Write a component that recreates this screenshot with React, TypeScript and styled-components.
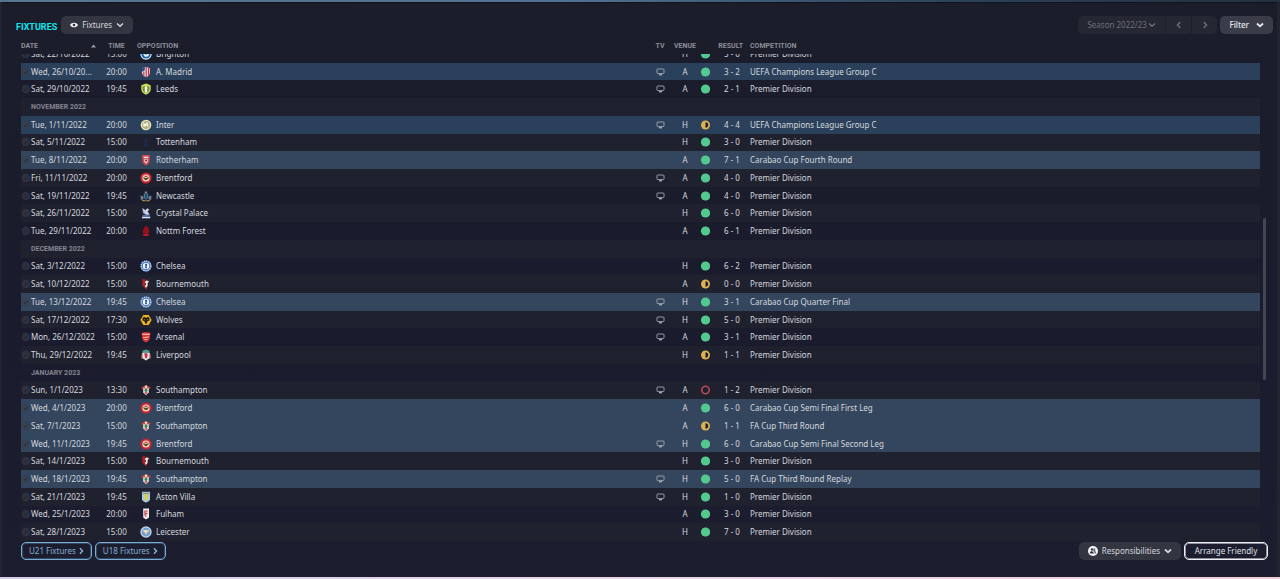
import React from 'react';
import styled, { createGlobalStyle, css } from 'styled-components';

const GlobalStyle = createGlobalStyle`
  *, *::before, *::after { box-sizing: border-box; }
  body {
    margin: 0;
    background: #1a1c2b;
    color: #d5d8df;
    font-family: 'Noto Sans', sans-serif;
    font-size: 8px;
    line-height: 12px;
  }
  button, select { font: inherit; color: inherit; margin: 0; cursor: pointer; }
`;

/* ---------- page frame ---------- */

const Page = styled.div`
  display: flex;
  flex-direction: column;
  min-height: 100vh;
  background: #22242f;
`;

const TopEdge = styled.div`
  height: 2px;
  background: linear-gradient(90deg, #587690 0%, #4f7190 45%, #2c4258 75%, #24303f 100%);
`;

const BottomEdge = styled.div`
  height: 2px;
  background: linear-gradient(90deg, #d3cde6 0%, #e6d3e6 45%, #f3cbd6 100%);
`;

const Panel = styled.main`
  flex: 1;
  display: flex;
  flex-direction: column;
  margin: 0 3px 0 2px;
  padding-top: 13px;
  background: linear-gradient(180deg, #1b1d2b, #1a1c2d 50%, #1c1d2e);
  border-top: 1px solid #10121d;
`;

const TitleBar = styled.header`
  display: flex;
  align-items: center;
  height: 18px;
  padding: 0 4px 0 14px;
`;

const Title = styled.h1`
  margin: 4px 4px 0 0;
  font-family: Roboto, sans-serif;
  font-size: 9px;
  line-height: 12px;
  font-weight: 700;
  color: #0fe6ee;
`;

const Spacer = styled.div`
  flex: 1;
`;

/* ---------- controls ---------- */

const MenuButton = styled.button<{ $strong?: boolean }>`
  display: flex;
  align-items: center;
  justify-content: center;
  height: 18px;
  padding: 0 9px;
  border: 0;
  border-radius: 5px;
  background: ${(p) => (p.$strong ? '#3a3d49' : '#333541')};
  font-weight: ${(p) => (p.$strong ? 500 : 400)};
  color: ${(p) => (p.$strong ? '#e9ebef' : '#d5d8df')};
`;

const ButtonLabel = styled.span`
  margin: 0 4px;
`;

const FilterLabel = styled.span`
  margin-right: 7px;
`;

const SeasonGroup = styled.div`
  display: flex;
  height: 18px;
  margin-right: 3px;
  border-radius: 5px;
  background: #252732;
  color: #6d707b;
`;

const SeasonField = styled.label`
  display: flex;
  align-items: center;
  width: 87px;
  padding-left: 9px;
`;

const SeasonSelect = styled.select`
  appearance: none;
  width: 61px;
  height: 18px;
  padding: 0;
  border: 0;
  background: transparent;
`;

const StepButton = styled.button`
  display: flex;
  align-items: center;
  justify-content: center;
  width: 26px;
  padding: 0;
  border: 0;
  border-left: 1px solid #1d1f2c;
  background: transparent;
`;

const OutlineButton = styled.button<{ $tone: 'blue' | 'white' }>`
  display: flex;
  align-items: center;
  justify-content: center;
  gap: 3px;
  height: 18px;
  padding: 0 7px;
  border: 1px solid;
  border-radius: 5px;
  background: transparent;
  ${(p) =>
    p.$tone === 'blue'
      ? css`
          min-width: 69px;
          border-color: #79acd8;
          box-shadow: inset 0 0 0 1px #33495f;
          color: #84afd6;
        `
      : css`
          min-width: 84px;
          border-color: #eef0f4;
          box-shadow: inset 0 0 0 1px #8e919b;
          color: #dfe1e7;
        `}
`;

const Footer = styled.footer`
  display: flex;
  align-items: flex-start;
  gap: 3px;
  height: 36px;
  padding: 1px 9px 0 19px;
`;

/* ---------- fixture table ---------- */

const TableArea = styled.div`
  flex: 1;
  display: flex;
  padding: 3px 11px 0 19px;
`;

const Table = styled.table`
  flex: 1;
  display: flex;
  flex-direction: column;
  min-width: 0;
`;

const rowGrid = css`
  display: grid;
  grid-template-columns: 80px 31px 24px minmax(0, 1fr) 20px 30px 10px 40px minmax(0, 1fr);
  align-items: center;
  padding-right: 16px;
`;

const Head = styled.thead`
  display: block;
  position: relative;
  z-index: 1;
  background: #1b1d2b;
`;

const HeadRow = styled.tr`
  ${rowGrid}
  height: 17px;
`;

const HeadCell = styled.th<{ $align?: string }>`
  padding: 0;
  font-family: Roboto, sans-serif;
  font-size: 7px;
  line-height: 8px;
  font-weight: 700;
  color: #8b8e99;
  white-space: nowrap;
  text-align: ${(p) => p.$align || 'left'};
`;

const DateHead = styled(HeadCell)`
  display: flex;
  align-items: center;
  justify-content: space-between;
  padding-right: 5px;
`;

const OppositionHead = styled(HeadCell)`
  grid-column: span 2;
  padding-left: 5px;
`;

const ResultHead = styled(HeadCell)`
  grid-column: span 2;
  padding-right: 7px;
  text-align: right;
`;

/* The list is scrolled, so its first row is partly under the head. */
const Body = styled.tbody`
  flex: 1;
  display: grid;
  grid-auto-rows: 1fr;
  margin-top: -9px;
`;

type Tone = 'plain' | 'europe' | 'cup';

const toneColors: Record<Tone, string> = {
  plain: 'transparent',
  europe: '#2b415b',
  cup: '#34465e',
};

const Row = styled.tr<{ $tone?: Tone }>`
  ${rowGrid}
  min-height: 16px;
  background: ${(p) => toneColors[p.$tone || 'plain']};
  &:nth-child(even) {
    background: ${(p) => (p.$tone && p.$tone !== 'plain' ? toneColors[p.$tone] : '#1f212f')};
  }
`;

const Cell = styled.td<{ $align?: string }>`
  padding: 0;
  white-space: nowrap;
  text-align: ${(p) => p.$align || 'left'};
`;

const MonthCell = styled.td`
  grid-column: 1 / -1;
  padding: 0 0 0 10px;
  font-family: Roboto, sans-serif;
  font-size: 7px;
  line-height: 8px;
  font-weight: 700;
  color: #82858f;
`;

const DateCell = styled(Cell)`
  display: flex;
  align-items: center;
`;

const DateText = styled.span`
  margin-left: 1px;
`;

const IconCell = styled(Cell)`
  display: flex;
  align-items: center;
  justify-content: center;
`;

const BadgeCell = styled(IconCell)`
  padding-left: 3px;
`;

const ResultCell = styled(Cell)`
  padding-left: 4px;
  text-align: center;
`;

const ScrollTrack = styled.div`
  display: flex;
  flex-direction: column;
  width: 3px;
  margin-left: 3px;
`;

const ScrollThumb = styled.div`
  flex: 0 0 32%;
  border-radius: 2px;
  background: #444653;
`;

const ScrollGap = styled.div<{ $grow: number }>`
  flex: ${(p) => p.$grow};
`;

/* ---------- icons ---------- */

const Chevron = ({ dir = 'down', w = 1.4 }: { dir?: 'down' | 'left' | 'right'; w?: number }) => {
  const d = { down: 'M1 2.5 4 5.3 7 2.5', left: 'M5.2 1 2.5 4 5.2 7', right: 'M2.8 1 5.5 4 2.8 7' }[dir];
  return (
    <svg width="8" height="8" viewBox="0 0 8 8" fill="none" stroke="currentColor" strokeWidth={w} aria-hidden="true">
      <path d={d} />
    </svg>
  );
};

const LinkArrow = () => (
  <svg width="5" height="8" viewBox="0 0 5 8" fill="none" stroke="currentColor" strokeWidth="1.5" aria-hidden="true">
    <path d="M1 1.2 3.5 4 1 6.8" />
  </svg>
);

const Eye = () => (
  <svg width="8" height="8" viewBox="0 0 8 8" aria-hidden="true">
    <path d="M0 4C1.6 .9 6.4 .9 8 4 6.4 7.1 1.6 7.1 0 4Z" fill="#f4f5f7" />
    <circle cx="4" cy="4" r="1.3" fill="#333541" />
  </svg>
);

const Delegate = () => (
  <svg width="10" height="10" viewBox="0 0 10 10" aria-hidden="true">
    <circle cx="5" cy="5" r="5" fill="#f4f5f7" />
    <circle cx="4" cy="3.4" r="1.2" fill="#2b2d38" />
    <path d="M1.9 7.6c0-1.8.8-2.7 2.1-2.7l2.2 2.7Z" fill="#2b2d38" />
    <path d="M5.6 2.6h1.6v2.2L8.2 7.5H7L5.4 5Z" fill="#5b5e69" />
  </svg>
);

const SortUp = () => (
  <svg width="5" height="4" viewBox="0 0 5 4" aria-hidden="true">
    <path d="M0 3.5 2.5 .5 5 3.5Z" fill="#9a9da7" />
  </svg>
);

const Tick = () => (
  <svg width="9" height="10" viewBox="0 0 9 10" aria-hidden="true">
    <circle cx="4.8" cy="5" r="4.2" fill="#3a3d48" fillOpacity=".6" />
    <path d="M2.8 5.2 4.2 6.5 6.8 3.6" fill="none" stroke="#1b1d29" strokeOpacity=".6" />
  </svg>
);

const Screen = () => (
  <svg width="9" height="8" viewBox="0 0 9 8" role="img" aria-label="Televised">
    <rect x="1" y="1" width="7" height="4.6" rx=".8" fill="none" stroke="#a3a7b1" strokeWidth=".9" />
    <path d="M3 6h3v1.4H3Z" fill="#a3a7b1" />
  </svg>
);

const Outcome = ({ kind }: { kind: 'W' | 'D' | 'L' }) => (
  <svg width="10" height="10" viewBox="0 0 10 10" role="img" aria-label={{ W: 'Won', D: 'Drawn', L: 'Lost' }[kind]}>
    {kind === 'W' && <circle cx="5.5" cy="5" r="4.6" fill="#54c98f" />}
    {kind === 'D' && (
      <>
        <circle cx="5.5" cy="5" r="4.5" fill="#deb055" />
        <path d="M5.5 2.3a2.7 2.7 0 0 1 0 5.4Z" fill="#1d1f2d" />
      </>
    )}
    {kind === 'L' && <circle cx="5.500" cy="5" r="3.7" fill="none" stroke="#bd4a58" strokeWidth="1.600" />}
  </svg>
);

const crests: Record<string, React.ReactNode> = {
  Brighton: (
    <>
      <circle cx="6" cy="6" r="5.7" fill="#e9eff8" />
      <circle cx="6" cy="6" r="4.6" fill="#1763b5" />
      <path d="M2.6 5.2 6 6.8l3.5-2-1.3 3.4-3 .8Z" fill="#f2f6fc" />
    </>
  ),
  'A. Madrid': (
    <>
      <path d="M2 2.3 6 1l4 1.3v3.9c0 2.3-1.5 3.8-4 5-2.3-1.2-4-2.7-4-5Z" fill="#e7e3ea" />
      <path d="M2 2.3 5.2 1.3 4.4 5 2 5.6Z" fill="#2c4c94" />
      <path d="M5.6 1.2h1.2v9.5L5.6 11ZM8 1.7l1.3.4v6.8L8 10ZM3.2 5.5h1.2v4.7L3.2 9Z" fill="#d8303f" />
    </>
  ),
  Leeds: (
    <>
      <path d="M1.3 2.2 6 .6l4.7 1.6v4c0 2.6-1.9 4.2-4.7 5.5C3.2 10.4 1.3 8.8 1.3 6.2Z" fill="#d3df4f" />
      <path d="M2.6 3.2h6.8v3c0 1.9-1.4 3.1-3.4 4.1-2-1-3.4-2.2-3.4-4.1Z" fill="#6f8f3f" />
      <path d="M4.8 3.5h2.4v5.6L6 9.9 4.8 9Z" fill="#f3f5e8" />
    </>
  ),
  Inter: (
    <>
      <circle cx="6" cy="6" r="5.3" fill="#e8e4bd" />
      <circle cx="6" cy="6" r="4" fill="#b5b084" />
      <path d="M4 7.8V4.6L5.6 6.6 7 4.2 8 7.6" fill="none" stroke="#fffbe6" strokeWidth="1.2" />
    </>
  ),
  Tottenham: (
    <>
      <path d="M5.7 1.5 7 2.3 6 3.7 7.1 5 6 7.4H5.5L5 4.5Z" fill="#1f2d66" />
      <circle cx="5.8" cy="9" r="1.4" fill="#1f2d66" />
    </>
  ),
  Rotherham: (
    <>
      <path d="M2 1h8l-.3 6.5C9.3 9.3 8 10.5 6 11.4 4 10.5 2.7 9.3 2.3 7.5Z" fill="#c94a50" />
      <path d="M3.7 2.6h4.6v1.6H3.7Z" fill="#f1dcdb" />
      <path d="M4.2 5h3.6v2.8L6 9.8 4.2 7.8Z" fill="#e9c9c8" />
      <circle cx="6" cy="6.6" r="1" fill="#8d2931" />
    </>
  ),
  Brentford: (
    <>
      <circle cx="6" cy="6" r="5.6" fill="#cf2530" />
      <circle cx="6" cy="6" r="3.6" fill="#f3dfd0" />
      <path d="M2.9 5 6 6.1 9.1 5 8.1 7 6 8.6 3.9 7Z" fill="#5a4a20" />
      <path d="M4.6 3.7h2.8V5H4.6Z" fill="#c33b36" />
    </>
  ),
  Newcastle: (
    <>
      <path d="M4.8 1.5h2.4v2h-2.4Z" fill="#8f8a7c" />
      <path d="M3.8 3.5h4.4v4.6L6 10 3.8 8.1Z" fill="#3e7fa0" />
      <path d="M.6 5.5 3.4 6.5v2.8L.8 10ZM11.4 5.5 8.6 6.5v2.8l2.6.7Z" fill="#74828f" />
      <path d="M5.4 3.8h1.2v5H5.4Z" fill="#25272f" />
      <path d="M2 9.7 6 10.6 10 9.7 9.5 11.2h-7Z" fill="#b7905a" />
    </>
  ),
  'Crystal Palace': (
    <>
      <path d="M2.2 1 5.6 3.3 7.2 1.3 9.3 2.6 7.6 4.6 9.8 7.6 6.3 7.9 3.6 6.1Z" fill="#c9d4e6" />
      <path d="M2 3.4 4.7 5.2 3.8 7.3Z" fill="#8198c4" />
      <path d="M2.3 8.2 6 7.6l4 .8.3 2.9H1.8Z" fill="#5673ad" />
      <path d="M2 10h8.2v1.2H2Z" fill="#dbe3ef" />
    </>
  ),
  'Nottm Forest': (
    <>
      <path d="M6 .8C7.5 1.8 8.6 3.2 8.8 4.6 9.5 6 9.2 7.5 8.8 8.2H3.2C2.7 7 2.7 5.8 3.3 4.6 3.6 3.1 4.6 1.8 6 .8Z" fill="#98101a" />
      <path d="M5.3 8h1.4v1h2v2H3.3V9h2Z" fill="#c21420" />
    </>
  ),
  Chelsea: (
    <>
      <circle cx="6" cy="6" r="5.5" fill="#3d6fb5" />
      <circle cx="6" cy="6" r="4.8" fill="none" stroke="#c3d6ec" strokeWidth="1.3" strokeDasharray="1.5 .7" />
      <circle cx="6" cy="6" r="3.2" fill="#f4f7fb" />
      <path d="M5 3.8h1.8l.6 1.5-.9 1 .8 2H4.9l.4-2Z" fill="#2858a4" />
    </>
  ),
  Bournemouth: (
    <>
      <path d="M2.3 1.2h7.4v6L6 11.4 2.3 7.2Z" fill="#b01e29" />
      <path d="M5.3 1.2h4.4v6L6.6 10.8 5.3 7Z" fill="#202028" />
      <path d="M4.7 4 6.8 2.3 9 3.5 7.7 5 7.6 8 5.9 10 5 7.8 6.2 6Z" fill="#ece6e6" />
    </>
  ),
  Wolves: (
    <>
      <path d="M3.3 1h5.4L11.6 6 8.7 11H3.3L.4 6Z" fill="#f3b51d" />
      <path d="M2.6 4 4.1 2.8 6 4 7.9 2.8 9.4 4 9.6 6.5 7.5 7.3 6.8 9.6H5.2L4.5 7.3 2.4 6.5Z" fill="#1c1b18" />
      <path d="M3.8 5.2 5.2 6.2M8.2 5.2 6.8 6.2" stroke="#f3b51d" strokeWidth=".6" />
    </>
  ),
  Arsenal: (
    <>
      <path d="M1.6 1.7C4 .8 8 .8 10.4 1.7L10 7C9.6 9 8.1 10.5 6 11.5 3.9 10.5 2.4 9 2 7Z" fill="#d0323c" />
      <path d="M2.3 2.7h7.4v1.2H2.3Z" fill="#f0c6b2" />
      <path d="M2.8 6.2 8.9 5.3v1.2L3.4 7.3ZM4.4 8h3v.9h-3Z" fill="#e9b58e" />
    </>
  ),
  Liverpool: (
    <>
      <path d="M2.5 1.7 6 .6l3.5 1.1v2h-7Z" fill="#4f9f88" />
      <path d="M2.2 3.7h7.6V9L6 11.4 2.2 9Z" fill="#d9e8e2" />
      <path d="M4.2 4.4 6.4 4.1 7.8 5.3 6.9 9.2H5.2Z" fill="#cf3645" />
      <path d="M1.3 5.3h1v4.5h-1ZM9.7 5.3h1v4.5h-1Z" fill="#d8545c" />
    </>
  ),
  Southampton: (
    <>
      <path d="M1.2 3.4 4 2.3 6 1 8 2.3l2.8 1.1-1 1.3H2.2Z" fill="#d04845" />
      <path d="M3.2 4.2h5.6v4L6 11.2 3.2 8.2Z" fill="#eee4df" />
      <circle cx="6" cy="2.7" r="1.2" fill="#f0e6d5" />
      <path d="M4.9 4.6h2.2l.5 2.3L6 8.3 4.4 6.9Z" fill="#3f8055" />
      <path d="M4.4 8.3h3.2L6 10.6Z" fill="#c93a40" />
    </>
  ),
  'Aston Villa': (
    <>
      <path d="M2 .8h8v7.4C9.7 9.9 8 11 6 11.6 4 11 2.3 9.9 2 8.2Z" fill="#aacbe5" />
      <path d="M2.8 1.6h6.4v1.6H2.8Z" fill="#8e9f6c" />
      <path d="M4 4 6.5 3.4 8 4.6 7.5 6.4 8.3 8.6 6.4 8.3 5.3 10 4.5 8 5.3 6Z" fill="#e3d22d" />
    </>
  ),
  Fulham: (
    <>
      <path d="M3.2 .6h5.8v8.8L6 11.6 3.2 9.4Z" fill="#f0eeee" />
      <path d="M5.4 2.6h2.2v1H6.3v1.5h1.2v1H6.3v2.8h-.9ZM4.2 2.4h.6v5h-.6Z" fill="#c4242d" />
    </>
  ),
  Leicester: (
    <>
      <circle cx="6" cy="6" r="5.7" fill="#b9d2ec" />
      <circle cx="6" cy="6" r="4.3" fill="#6d9cd2" />
      <path d="M2.8 3.8 4.7 4.2 6 3.6 7.3 4.2 9.2 3.8 8.2 6.2 6.9 6.7 6 9.6 5.1 6.7 3.8 6.2Z" fill="#e9dcae" />
    </>
  ),
};

const Crest = ({ club }: { club: string }) => (
  <svg width="12" height="12" viewBox="0 0 12 12" aria-hidden="true">
    {crests[club]}
  </svg>
);

/* ---------- data ---------- */

type Fixture = {
  date: string;
  time: string;
  club: string;
  tv?: boolean;
  venue: 'H' | 'A';
  outcome: 'W' | 'D' | 'L';
  score: string;
  competition: string;
};

const PL = 'Premier Division';
const UCL = 'UEFA Champions League Group C';

const f = (
  date: string, time: string, club: string, tv: boolean,
  venue: 'H' | 'A', outcome: 'W' | 'D' | 'L', score: string, competition: string = PL,
): Fixture => ({ date, time, club, tv, venue, outcome, score, competition });

const rows: (Fixture | string)[] = [
  f('Sat, 22/10/2022', '15:00', 'Brighton', false, 'H', 'W', '5 - 0'),
  f('Wed, 26/10/20...', '20:00', 'A. Madrid', true, 'A', 'W', '3 - 2', UCL),
  f('Sat, 29/10/2022', '19:45', 'Leeds', true, 'A', 'W', '2 - 1'),
  'NOVEMBER 2022',
  f('Tue, 1/11/2022', '20:00', 'Inter', true, 'H', 'D', '4 - 4', UCL),
  f('Sat, 5/11/2022', '15:00', 'Tottenham', false, 'H', 'W', '3 - 0'),
  f('Tue, 8/11/2022', '20:00', 'Rotherham', false, 'A', 'W', '7 - 1', 'Carabao Cup Fourth Round'),
  f('Fri, 11/11/2022', '20:00', 'Brentford', true, 'A', 'W', '4 - 0'),
  f('Sat, 19/11/2022', '19:45', 'Newcastle', true, 'A', 'W', '4 - 0'),
  f('Sat, 26/11/2022', '15:00', 'Crystal Palace', false, 'H', 'W', '6 - 0'),
  f('Tue, 29/11/2022', '20:00', 'Nottm Forest', false, 'A', 'W', '6 - 1'),
  'DECEMBER 2022',
  f('Sat, 3/12/2022', '15:00', 'Chelsea', false, 'H', 'W', '6 - 2'),
  f('Sat, 10/12/2022', '15:00', 'Bournemouth', false, 'A', 'D', '0 - 0'),
  f('Tue, 13/12/2022', '19:45', 'Chelsea', true, 'H', 'W', '3 - 1', 'Carabao Cup Quarter Final'),
  f('Sat, 17/12/2022', '17:30', 'Wolves', true, 'H', 'W', '5 - 0'),
  f('Mon, 26/12/2022', '15:00', 'Arsenal', true, 'A', 'W', '3 - 1'),
  f('Thu, 29/12/2022', '19:45', 'Liverpool', false, 'H', 'D', '1 - 1'),
  'JANUARY 2023',
  f('Sun, 1/1/2023', '13:30', 'Southampton', true, 'A', 'L', '1 - 2'),
  f('Wed, 4/1/2023', '20:00', 'Brentford', false, 'A', 'W', '6 - 0', 'Carabao Cup Semi Final First Leg'),
  f('Sat, 7/1/2023', '15:00', 'Southampton', false, 'A', 'D', '1 - 1', 'FA Cup Third Round'),
  f('Wed, 11/1/2023', '19:45', 'Brentford', true, 'H', 'W', '6 - 0', 'Carabao Cup Semi Final Second Leg'),
  f('Sat, 14/1/2023', '15:00', 'Bournemouth', false, 'H', 'W', '3 - 0'),
  f('Wed, 18/1/2023', '19:45', 'Southampton', true, 'H', 'W', '5 - 0', 'FA Cup Third Round Replay'),
  f('Sat, 21/1/2023', '19:45', 'Aston Villa', true, 'H', 'W', '1 - 0'),
  f('Wed, 25/1/2023', '20:00', 'Fulham', false, 'A', 'W', '3 - 0'),
  f('Sat, 28/1/2023', '15:00', 'Leicester', false, 'H', 'W', '7 - 0'),
];

const toneOf = (competition: string): Tone =>
  competition.startsWith('UEFA') ? 'europe' : competition.includes('Cup') ? 'cup' : 'plain';

const FixtureRow = ({ item }: { item: Fixture }) => (
  <Row $tone={toneOf(item.competition)}>
    <DateCell>
      <Tick />
      <DateText>{item.date}</DateText>
    </DateCell>
    <Cell $align="center">{item.time}</Cell>
    <BadgeCell><Crest club={item.club} /></BadgeCell>
    <Cell>{item.club}</Cell>
    <IconCell>{item.tv && <Screen />}</IconCell>
    <Cell $align="center">{item.venue}</Cell>
    <IconCell><Outcome kind={item.outcome} /></IconCell>
    <ResultCell>{item.score}</ResultCell>
    <Cell>{item.competition}</Cell>
  </Row>
);

export default function App() {
  return (
    <>
      <GlobalStyle />
      <Page>
        <TopEdge />
        <Panel>
          <TitleBar>
            <Title>FIXTURES</Title>
            <MenuButton aria-haspopup="menu">
              <Eye />
              <ButtonLabel>Fixtures</ButtonLabel>
              <Chevron />
            </MenuButton>
            <Spacer />
            <SeasonGroup>
              <SeasonField>
                <SeasonSelect aria-label="Season">
                  <option>Season 2022/23</option>
                </SeasonSelect>
                <Chevron />
              </SeasonField>
              <StepButton aria-label="Previous season"><Chevron dir="left" /></StepButton>
              <StepButton aria-label="Next season"><Chevron dir="right" /></StepButton>
            </SeasonGroup>
            <MenuButton $strong aria-haspopup="menu">
              <FilterLabel>Filter</FilterLabel>
              <Chevron w={1.8} />
            </MenuButton>
          </TitleBar>

          <TableArea>
            <Table>
              <Head>
                <HeadRow>
                  <DateHead>DATE<SortUp /></DateHead>
                  <HeadCell $align="center">TIME</HeadCell>
                  <OppositionHead colSpan={2}>OPPOSITION</OppositionHead>
                  <HeadCell $align="center">TV</HeadCell>
                  <HeadCell $align="center">VENUE</HeadCell>
                  <ResultHead colSpan={2}>RESULT</ResultHead>
                  <HeadCell>COMPETITION</HeadCell>
                </HeadRow>
              </Head>
              <Body>
                {rows.map((item) =>
                  typeof item === 'string' ? (
                    <Row key={item}><MonthCell colSpan={9}>{item}</MonthCell></Row>
                  ) : (
                    <FixtureRow key={item.date} item={item} />
                  ),
                )}
              </Body>
            </Table>
            <ScrollTrack aria-hidden="true">
              <ScrollGap $grow={18} />
              <ScrollThumb />
              <ScrollGap $grow={16} />
            </ScrollTrack>
          </TableArea>

          <Footer>
            <OutlineButton $tone="blue">U21 Fixtures<LinkArrow /></OutlineButton>
            <OutlineButton $tone="blue">U18 Fixtures<LinkArrow /></OutlineButton>
            <Spacer />
            <MenuButton aria-haspopup="menu">
              <Delegate />
              <ButtonLabel>Responsibilities</ButtonLabel>
              <Chevron w={1.8} />
            </MenuButton>
            <OutlineButton $tone="white">Arrange Friendly</OutlineButton>
          </Footer>
        </Panel>
        <BottomEdge />
      </Page>
    </>
  );
}
